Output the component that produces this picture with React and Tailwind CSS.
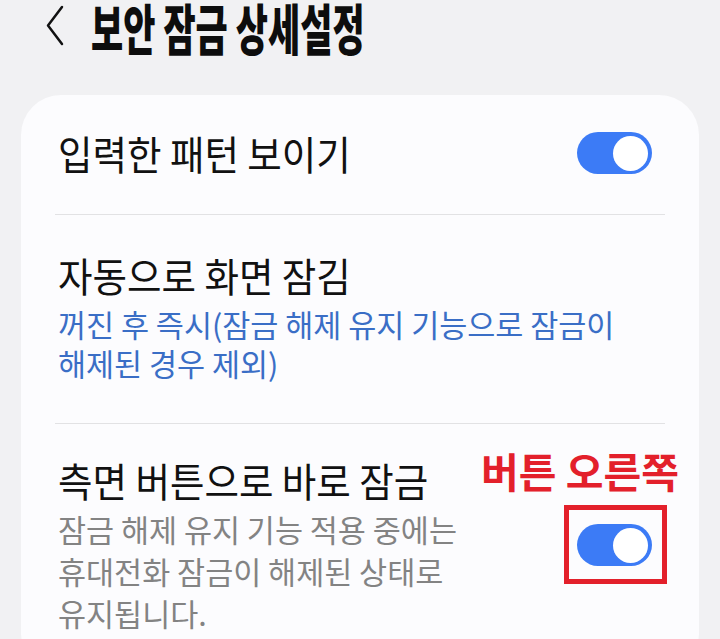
import React from "react";

function Toggle() {
  return (
    <div className="flex h-[42px] w-[75px] items-center justify-end rounded-full bg-[#3c7bf6] px-[4px]">
      <div className="h-[35px] w-[35px] rounded-full bg-white" />
    </div>
  );
}

export default function App() {
  return (
    <div className="min-h-[639px] w-full overflow-hidden bg-[#f1f1f3] font-['Noto_Sans_CJK_KR',sans-serif]">
      {/* Header */}
      <div className="flex h-[50px] items-center pl-[46px]">
        <svg width="18" height="42" viewBox="0 0 18 42" className="shrink-0">
          <path d="M16 3 L2 21.5 L16 40" fill="none" stroke="#111" strokeWidth="2.5" strokeLinecap="round" strokeLinejoin="round" />
        </svg>
        <span className="ml-[27px] inline-block origin-center scale-y-[1.55] whitespace-nowrap text-[35px] font-black leading-none text-[#0d0d0d]">
          보안 잠금 상세설정
        </span>
      </div>

      {/* Card */}
      <div className="mx-[21px] mt-[45px] rounded-[40px] bg-[#fcfcfe] px-[34px] pb-[40px]">
        {/* Item 1 */}
        <div className="flex items-center justify-between pb-[37px] pl-[3px] pr-[13px] pt-[34px]">
          <div className="origin-center scale-y-[1.07] whitespace-nowrap text-[37.5px] leading-[48px] text-[#111]">
            입력한 패턴 보이기
          </div>
          <Toggle />
        </div>
        <div className="h-px bg-[#e2e2e4]" />

        {/* Item 2 */}
        <div className="pb-[40px] pl-[3px] pt-[36px]">
          <div className="origin-center scale-y-[1.07] whitespace-nowrap text-[37.5px] leading-[48px] text-[#111]">
            자동으로 화면 잠김
          </div>
          <div className="mt-[6px] text-[30.5px] leading-[39px] text-[#3a6ec6]">
            <div className="whitespace-nowrap">꺼진 후 즉시(잠금 해제 유지 기능으로 잠금이</div>
            <div className="whitespace-nowrap">해제된 경우 제외)</div>
          </div>
        </div>
        <div className="h-px bg-[#e2e2e4]" />

        {/* Item 3 */}
        <div className="flex items-center justify-between pl-[3px] pr-[13px] pt-[32px]">
          <div>
            <div className="origin-center scale-y-[1.07] whitespace-nowrap text-[37.5px] leading-[48px] text-[#111]">
              측면 버튼으로 바로 잠금
            </div>
            <div className="mt-[4px] text-[30.5px] leading-[42px] text-[#838383]">
              <div className="whitespace-nowrap">잠금 해제 유지 기능 적용 중에는</div>
              <div className="whitespace-nowrap">휴대전화 잠금이 해제된 상태로</div>
              <div className="whitespace-nowrap">유지됩니다.</div>
            </div>
          </div>
          <div className="relative">
            <div className="absolute left-[-96px] top-[-78px] whitespace-nowrap text-[41px] font-bold leading-[48px] text-[#e3202b]">
              버튼 오른쪽
            </div>
            <Toggle />
            <div className="absolute -bottom-[18px] -left-[13px] -right-[15px] -top-[19px] border-[5px] border-[#e3202b]" />
          </div>
        </div>
      </div>
    </div>
  );
}
